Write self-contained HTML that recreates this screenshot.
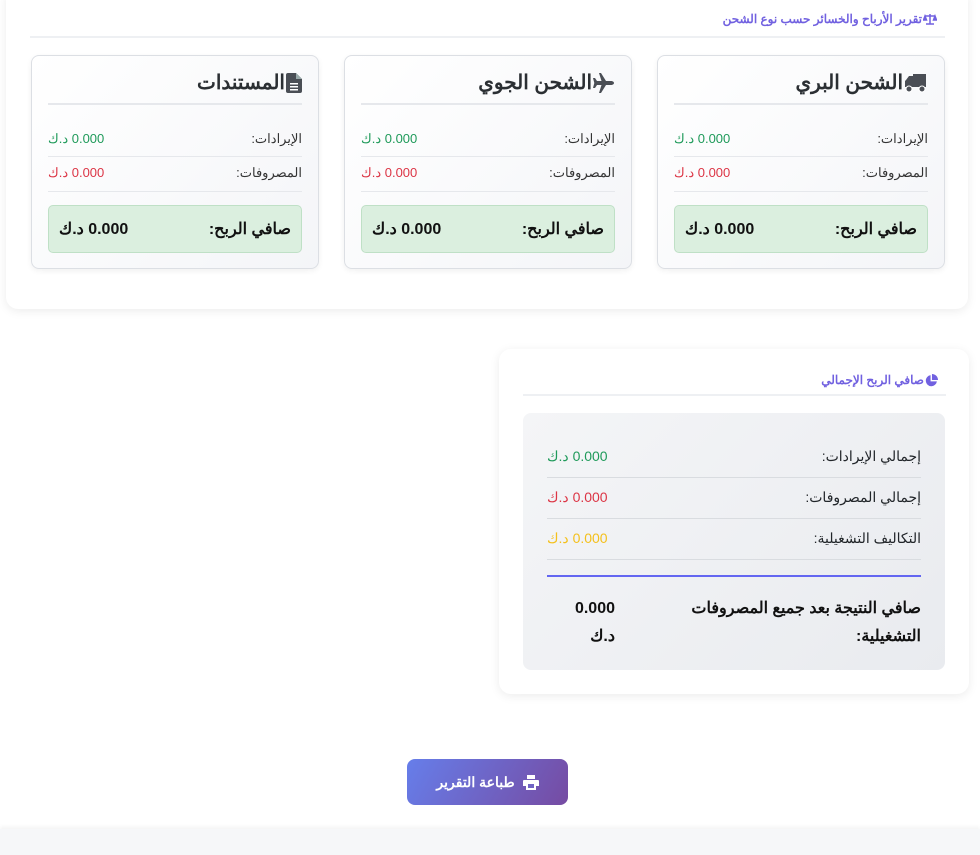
<!DOCTYPE html>
<html dir="rtl"><head><meta charset="utf-8"><style>
*{box-sizing:border-box;margin:0;padding:0}
body{width:980px;height:855px;background:#fff;font-family:"Liberation Sans","Noto Sans CJK SC",sans-serif;position:relative;overflow:hidden;color:#212529}
.foot{position:absolute;left:0;top:829px;width:980px;height:26px;background:#f6f7f9;box-shadow:0 -2px 4px rgba(0,0,0,.05)}
.card{position:absolute;background:#fff;border-radius:12px;box-shadow:0 2px 10px rgba(0,0,0,.08)}
.hd{position:absolute;font-size:12px;font-weight:bold;color:#7161e0;text-align:right;display:flex;align-items:center;gap:1px}
.hr{position:absolute;height:2px;background:#eef0f3}
.sc{position:absolute;top:55px;width:288px;height:214px;border:1px solid #dcdfe4;border-radius:8px;background:linear-gradient(135deg,#fff,#f4f5f8);box-shadow:0 2px 6px rgba(0,0,0,.06)}
.sc h3{position:absolute;right:16px;top:14px;font-size:20px;font-weight:bold;color:#2b2f33;display:flex;align-items:center;gap:1px}
.sc .l{position:absolute;left:16px;right:16px;height:1px;background:#e6e8ec}
.sc .row{position:absolute;left:16px;right:16px;font-size:13px;color:#333;display:flex;justify-content:space-between}
.g{color:#1f9a5a}.r{color:#dc3545}.y{color:#f4c01c}
.pb{position:absolute;left:16px;right:16px;top:149px;height:48px;background:#dbefdf;border:1px solid #bfe0c6;border-radius:5px;display:flex;justify-content:space-between;align-items:center;padding:0 10px;font-size:16px;font-weight:bold;color:#111}
.ib{position:absolute;left:24px;top:64px;width:422px;height:257px;border-radius:8px;background:linear-gradient(135deg,#f4f5f7,#e9ebef)}
.ib .row{position:absolute;left:24px;right:24px;font-size:14px;display:flex;justify-content:space-between}
.ib .l{position:absolute;left:24px;right:24px;height:1px;background:#d9dce0}
.btn{position:absolute;left:407px;top:759px;width:161px;height:46px;border-radius:8px;background:linear-gradient(120deg,#667eea,#764ba2);color:#fff;font-size:14px;font-weight:bold;display:flex;align-items:center;justify-content:center;gap:8px}
</style></head><body>
<div class="card" style="left:6px;top:-12px;width:962px;height:321px">
 <div class="hd" style="right:31px;top:24px"><svg width="14" height="12" viewBox="0 0 14 12"><g fill="none" stroke="#7161e0" stroke-width="1.5"><path d="M7 1v10M2 3h10M3 11h8"/><path d="M2 3L0.5 7h3zM12 3l-1.5 4h3z" fill="#7161e0"/></g></svg><span>تقرير الأرباح والخسائر حسب نوع الشحن</span></div>
 <div class="hr" style="left:24px;right:23px;top:48px"></div>
</div>
<div class="sc" style="left:657px">
 <h3><svg width="24" height="20" viewBox="0 0 24 20"><path fill="#4a4e55" d="M9 1h13v13H9zM2 7l3-4h4v11H1V8z"/><circle cx="5" cy="16" r="3" fill="#4a4e55" stroke="#fff" stroke-width="1"/><circle cx="18" cy="16" r="3" fill="#4a4e55" stroke="#fff" stroke-width="1"/></svg><span>الشحن البري</span></h3><div class="l" style="top:47px;height:2px"></div>
 <div class="row" style="top:75px"><span>الإيرادات:</span><span class="g">0.000 د.ك</span></div>
 <div class="l" style="top:100px"></div>
 <div class="row" style="top:109px"><span>المصروفات:</span><span class="r">0.000 د.ك</span></div>
 <div class="l" style="top:135px"></div>
 <div class="pb"><span>صافي الربح:</span><span>0.000 د.ك</span></div>
</div>
<div class="sc" style="left:344px">
 <h3><svg width="22" height="20" viewBox="0 0 22 20"><path fill="#4a4e55" d="M21 10c0-1.2-1.5-2-3-2h-5L8 0H6l2.5 8H4L2 5H0l1.3 5L0 15h2l2-3h4.5L6 20h2l5-8h5c1.5 0 3-.8 3-2z"/></svg><span>الشحن الجوي</span></h3><div class="l" style="top:47px;height:2px"></div>
 <div class="row" style="top:75px"><span>الإيرادات:</span><span class="g">0.000 د.ك</span></div>
 <div class="l" style="top:100px"></div>
 <div class="row" style="top:109px"><span>المصروفات:</span><span class="r">0.000 د.ك</span></div>
 <div class="l" style="top:135px"></div>
 <div class="pb"><span>صافي الربح:</span><span>0.000 د.ك</span></div>
</div>
<div class="sc" style="left:31px">
 <h3><svg width="16" height="20" viewBox="0 0 16 20"><path fill="#4a4e55" d="M0 2a2 2 0 012-2h8l6 6v12a2 2 0 01-2 2H2a2 2 0 01-2-2z"/><path fill="#fff" d="M4 10h8v1.5H4zM4 13h8v1.5H4zM4 16h8v1.5H4z"/><path fill="#9aa" d="M10 0v6h6z"/></svg><span>المستندات</span></h3><div class="l" style="top:47px;height:2px"></div>
 <div class="row" style="top:75px"><span>الإيرادات:</span><span class="g">0.000 د.ك</span></div>
 <div class="l" style="top:100px"></div>
 <div class="row" style="top:109px"><span>المصروفات:</span><span class="r">0.000 د.ك</span></div>
 <div class="l" style="top:135px"></div>
 <div class="pb"><span>صافي الربح:</span><span>0.000 د.ك</span></div>
</div>
<div class="card" style="left:499px;top:349px;width:470px;height:345px">
 <div class="hd" style="right:31px;top:24px"><svg width="13" height="13" viewBox="0 0 14 14"><path fill="#7161e0" d="M6 1.2A6 6 0 1012.8 8H6z"/><path fill="#7161e0" d="M7.5 0v6.5H14A6.5 6.5 0 007.5 0z"/></svg><span>صافي الربح الإجمالي</span></div>
 <div class="hr" style="left:24px;right:23px;top:45px"></div>
 <div class="ib">
  <div class="row" style="top:35px"><span>إجمالي الإيرادات:</span><span class="g">0.000 د.ك</span></div>
  <div class="l" style="top:64px"></div>
  <div class="row" style="top:76px"><span>إجمالي المصروفات:</span><span class="r">0.000 د.ك</span></div>
  <div class="l" style="top:105px"></div>
  <div class="row" style="top:117px"><span>التكاليف التشغيلية:</span><span class="y">0.000 د.ك</span></div>
  <div class="l" style="top:146px"></div>
  <div class="l" style="top:162px;height:2px;background:#6366f1"></div>
  <div class="row" style="top:182px;font-size:16px;font-weight:bold;line-height:28px;color:#111"><span style="width:290px">صافي النتيجة بعد جميع المصروفات التشغيلية:</span><span style="width:70px;text-align:right;padding-right:2px">0.000<br>د.ك</span></div>
 </div>
</div>
<div class="btn"><svg width="16" height="15" viewBox="0 0 16 15"><path fill="#fff" d="M4 0h8v4H4zM1 5h14a1 1 0 011 1v5h-3v4H3v-4H0V6a1 1 0 011-1z"/><path fill="#7064c4" d="M5 9h6v4H5z"/></svg><span>طباعة التقرير</span></div>
<div class="foot"></div>
</body></html>
